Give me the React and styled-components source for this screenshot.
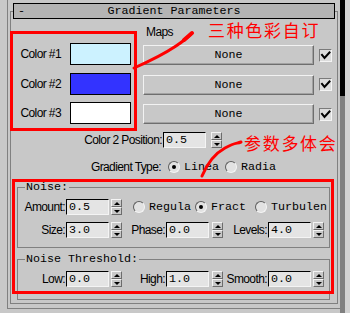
import React from "react";
import styled, { createGlobalStyle } from "styled-components";

const MONO = `"Liberation Mono", "Courier New", monospace`;
const SANS = `"Liberation Sans", Arial, sans-serif`;
const CJK = `"Noto Sans CJK SC", "Noto Sans", sans-serif`;

const GlobalStyle = createGlobalStyle`
  html, body { margin: 0; padding: 0; background: #c8c8c8; }
  body { width: 350px; height: 313px; overflow: hidden; font-family: ${SANS}; }
  * { box-sizing: border-box; }
`;

const Screen = styled.div`
  position: relative;
  width: 350px;
  height: 313px;
  display: flex;
  background: #c8c8c8;
  overflow: hidden;
`;

const Main = styled.div`
  width: 340px;
  padding-left: 7px;
`;

const Frame = styled.div`
  border-left: 1px solid #808080;
  border-bottom: 1px solid #808080;
  padding: 11px 2px 4px 2px;
`;

const Rollout = styled.section`
  border: 1px solid #808080;
  padding: 0 0 3px;
`;

const TitleBar = styled.div`
  margin: -9px 2px 0;
  height: 16px;
  border: 1px solid #000;
  background: #b4b4b4;
  display: grid;
  grid-template-columns: 1fr auto 1fr;
  align-items: center;
  font: 11.67px/14px ${MONO};
  color: #000;
`;

const Collapse = styled.span`
  padding-left: 4px;
`;

const TopSection = styled.div`
  display: flex;
  align-items: flex-start;
  gap: 6px;
`;

const ColorBox = styled.div`
  margin: 12px 0 0 -1px;
  width: 127px;
  border: 3px solid #ff0000;
  padding: 9px 3px 4px 0;
  display: flex;
  flex-direction: column;
  gap: 7.5px;
`;

const ColorRow = styled.div`
  display: flex;
  justify-content: flex-end;
  align-items: center;
  gap: 9px;
`;

const SansLabel = styled.span`
  font: 12px/14px ${SANS};
  letter-spacing: -0.6px;
  color: #000;
  white-space: nowrap;
`;

const Swatch = styled.div`
  width: 61px;
  height: 22px;
  border: 1px solid #000;
  background: ${(p) => p.$color};
`;

const MapsCol = styled.div`
  display: flex;
  flex-direction: column;
`;

const MapsHeader = styled.div`
  height: 26px;
  display: flex;
  align-items: center;
  padding-left: 3px;
`;

const Annotation = styled.span`
  font: 17px/16px ${CJK};
  letter-spacing: 1.7px;
  color: #ff0000;
  white-space: nowrap;
  margin-left: ${(p) => p.$ml}px;
  margin-bottom: ${(p) => p.$mb || 0}px;
  padding-top: ${(p) => p.$pt || 0}px;
  align-self: ${(p) => (p.$top ? "flex-start" : "center")};
`;

const MapRows = styled.div`
  display: flex;
  flex-direction: column;
  gap: 9.5px;
`;

const MapRow = styled.div`
  display: flex;
  align-items: center;
  gap: 5px;
`;

const MapButton = styled.button`
  width: 171px;
  height: 20px;
  margin: 0;
  padding: 0;
  background: #c8c8c8;
  border: 1px solid;
  border-color: #f2f2f2 #6e6e6e #6e6e6e #f2f2f2;
  box-shadow: inset -1px -1px 0 #a2a2a2;
  font: 11.67px/16px ${MONO};
  color: #000;
  text-align: center;
`;

const CheckBox = styled.span`
  width: 13px;
  height: 13px;
  flex: none;
  background: #dcdcdc;
  border: 1px solid;
  border-color: #7a7a7a #f4f4f4 #f4f4f4 #7a7a7a;
  display: flex;
  align-items: center;
  justify-content: center;
`;

const FormRow = styled.div`
  display: flex;
  align-items: center;
  height: 16px;
  margin-top: ${(p) => p.$mt || 0}px;
`;

const RowLabel = styled(SansLabel)`
  width: ${(p) => p.$w}px;
  text-align: right;
  padding-right: 1px;
  flex: none;
`;

const NumInput = styled.input`
  width: ${(p) => p.$w || 43}px;
  height: 16px;
  margin: 0;
  flex: none;
  background: #e4e4e4;
  border: 1px solid;
  border-color: #000 #f4f4f4 #f4f4f4 #000;
  padding: 0 0 0 2px;
  font: 11.67px/14px ${MONO};
  color: #000;
  outline: none;
`;

const Spinner = styled.div`
  margin-left: ${(p) => p.$gap}px;
  width: 11px;
  height: 16px;
  flex: none;
  display: flex;
  flex-direction: column;
`;

const SpinHalf = styled.span`
  flex: 1;
  background: #c8c8c8;
  border: 1px solid;
  border-color: #f4f4f4 #6c6c6c #6c6c6c #f4f4f4;
  display: flex;
  align-items: center;
  justify-content: center;
  &::after {
    content: "";
    border-left: 3px solid transparent;
    border-right: 3px solid transparent;
    ${(p) => (p.$down ? "border-top: 3px solid #000;" : "border-bottom: 3px solid #000;")}
  }
`;

const FieldWrap = styled.div`
  display: flex;
  align-items: center;
`;

const RadioOption = styled.label`
  display: flex;
  align-items: center;
  margin-left: ${(p) => p.$ml}px;
  flex: none;
`;

const RadioDot = styled.span`
  width: 12px;
  height: 12px;
  flex: none;
  border-radius: 50%;
  background: #e2e2e2;
  border: 1px solid;
  border-color: #5e5e5e #f4f4f4 #f4f4f4 #5e5e5e;
  display: flex;
  align-items: center;
  justify-content: center;
  &::after {
    content: "";
    width: 4px;
    height: 4px;
    border-radius: 50%;
    background: ${(p) => (p.$on ? "#000" : "transparent")};
  }
`;

const RadioText = styled.span`
  width: ${(p) => p.$w}px;
  margin-left: 4px;
  white-space: nowrap;
  font: 11.67px/14px ${MONO};
  color: #000;
`;

const NoiseSection = styled.div`
  position: relative;
  padding: 0 7px 0 6px;
`;

const Group = styled.fieldset`
  margin: ${(p) => p.$mt}px 0 0;
  padding: 5px 0 ${(p) => p.$pb}px;
  border: 1px solid #808080;
  min-width: 0;
  display: flex;
  flex-direction: column;
  gap: 7px;
`;

const Legend = styled.legend`
  margin-left: 7px;
  padding: 0 1px;
  font: 11.67px/14px ${MONO};
  color: #000;
`;

const RedFrame = styled.div`
  position: absolute;
  top: -1px;
  left: 1px;
  right: 3px;
  bottom: 6px;
  border: 3px solid #ff0000;
  pointer-events: none;
`;

const ScrollCol = styled.div`
  width: 10px;
  display: flex;
`;

const Track = styled.div`
  width: 5px;
  background: #808080;
`;

const Thumb = styled.div`
  height: 96px;
  background: #000;
`;

const Gutter = styled.div`
  flex: 1;
  background: #d2d2d2;
`;

const Strokes = styled.svg`
  position: absolute;
  left: 0;
  top: 0;
  pointer-events: none;
`;

function Field({ label, labelWidth, value, gap = 2, inputWidth }) {
  return (
    <FieldWrap>
      <RowLabel $w={labelWidth}>{label}</RowLabel>
      <NumInput $w={inputWidth} readOnly defaultValue={value} />
      <Spinner $gap={gap}>
        <SpinHalf />
        <SpinHalf $down />
      </Spinner>
    </FieldWrap>
  );
}

function Radio({ text, on, ml, width }) {
  return (
    <RadioOption $ml={ml}>
      <RadioDot $on={on} />
      <RadioText $w={width}>{text}</RadioText>
    </RadioOption>
  );
}

const Tick = () => (
  <svg width="11" height="11" viewBox="0 0 11 11">
    <path d="M2 5 L4.5 8 L9.5 2.5" fill="none" stroke="#000" strokeWidth="2" strokeLinecap="square" />
  </svg>
);

const colors = [
  { name: "Color #1", color: "#ccf2ff" },
  { name: "Color #2", color: "#3333ff" },
  { name: "Color #3", color: "#ffffff" },
];

export default function App() {
  return (
    <>
      <GlobalStyle />
      <Screen>
        <Main>
          <Frame>
            <Rollout>
              <TitleBar>
                <Collapse>-</Collapse>
                <span>Gradient Parameters</span>
                <span />
              </TitleBar>

              <TopSection>
                <ColorBox>
                  {colors.map((c) => (
                    <ColorRow key={c.name}>
                      <SansLabel>{c.name}</SansLabel>
                      <Swatch $color={c.color} />
                    </ColorRow>
                  ))}
                </ColorBox>
                <MapsCol>
                  <MapsHeader>
                    <SansLabel>Maps</SansLabel>
                    <Annotation $ml={35} $mb={4}>三种色彩自订</Annotation>
                  </MapsHeader>
                  <MapRows>
                    {colors.map((c) => (
                      <MapRow key={c.name}>
                        <MapButton type="button">None</MapButton>
                        <CheckBox>
                          <Tick />
                        </CheckBox>
                      </MapRow>
                    ))}
                  </MapRows>
                </MapsCol>
              </TopSection>

              <FormRow $mt={1}>
                <Field label="Color 2 Position:" labelWidth={152} value="0.5" gap={5} />
                <Annotation $ml={22} $pt={3} $top>参数多体会</Annotation>
              </FormRow>

              <FormRow $mt={11}>
                <RowLabel $w={151}>Gradient Type:</RowLabel>
                <Radio text="Linea" on ml={6} width={35} />
                <Radio text="Radia" ml={6} width={35} />
              </FormRow>

              <NoiseSection>
                <Group $mt={5} $pb={9}>
                  <Legend>Noise:</Legend>
                  <FormRow>
                    <Field label="Amount:" labelWidth={48} value="0.5" />
                    <Radio text="Regula" ml={11} width={42} />
                    <Radio text="Fract" on ml={4} width={35} />
                    <Radio text="Turbulen" ml={9} width={56} />
                  </FormRow>
                  <FormRow>
                    <Field label="Size:" labelWidth={48} value="3.0" />
                    <Field label="Phase:" labelWidth={44} value="0.0" gap={3} />
                    <Field label="Levels:" labelWidth={45} value="4.0" />
                  </FormRow>
                </Group>
                <Group $mt={4} $pb={12}>
                  <Legend>Noise Threshold:</Legend>
                  <FormRow>
                    <Field label="Low:" labelWidth={48} value="0.0" />
                    <Field label="High:" labelWidth={44} value="1.0" gap={3} />
                    <Field label="Smooth:" labelWidth={45} value="0.0" />
                  </FormRow>
                </Group>
                <RedFrame />
              </NoiseSection>
            </Rollout>
          </Frame>
        </Main>
        <ScrollCol>
          <Track>
            <Thumb />
          </Track>
          <Gutter />
        </ScrollCol>
        <Strokes width="350" height="313" viewBox="0 0 350 313">
          <path d="M134 68 C150 61, 164 54, 176 46 S188 37, 192 33" fill="none" stroke="#ff0000" strokeWidth="3" strokeLinecap="round" />
          <path d="M184 40 L192 33" fill="none" stroke="#ff0000" strokeWidth="4" strokeLinecap="round" />
          <path d="M202 176 C207 164, 214 154, 225 148 S236 144, 241 142" fill="none" stroke="#ff0000" strokeWidth="3" strokeLinecap="round" />
        </Strokes>
      </Screen>
    </>
  );
}
